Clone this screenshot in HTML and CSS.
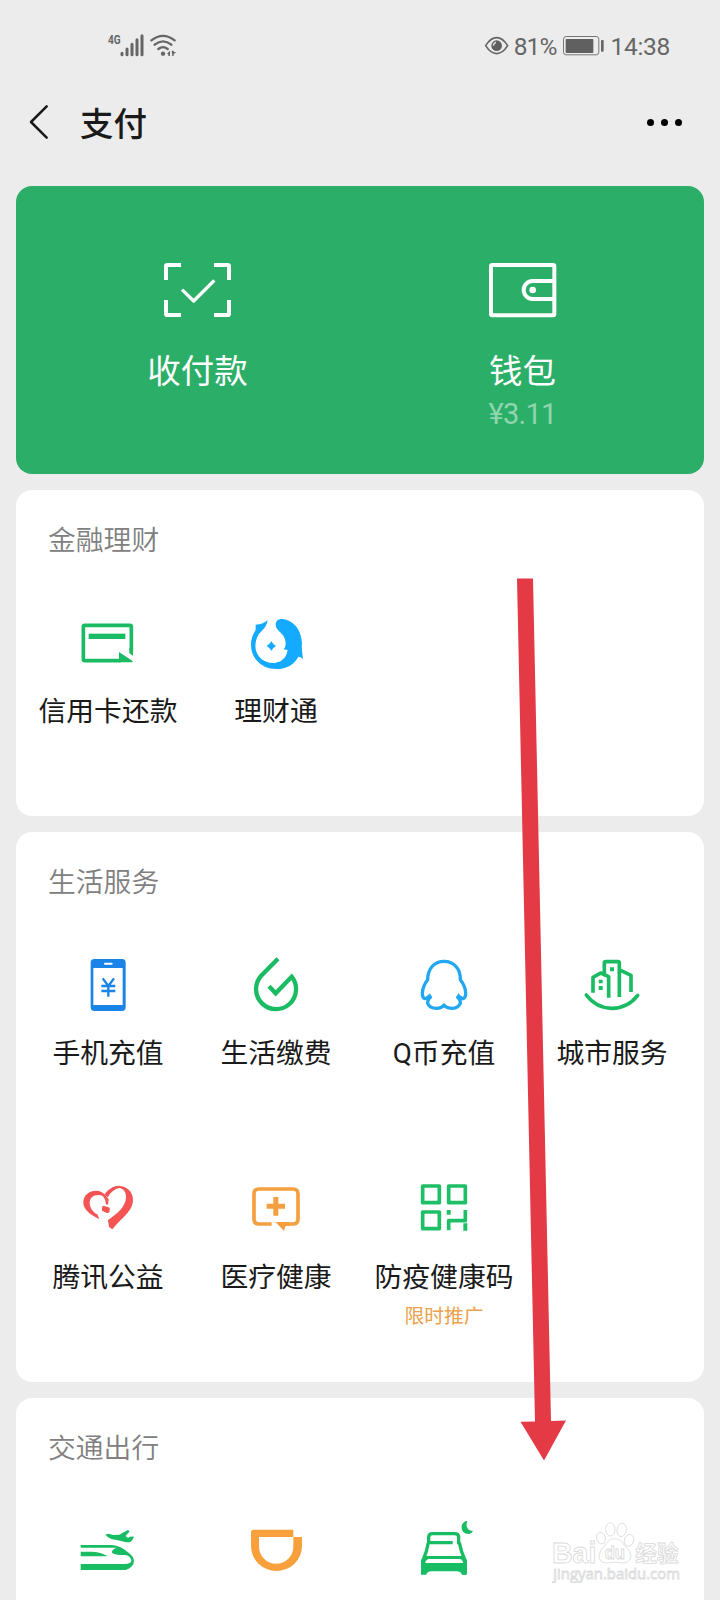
FILE: index.html
```html
<!DOCTYPE html>
<html lang="zh-CN">
<head>
<meta charset="utf-8">
<title>支付</title>
<link rel="stylesheet" href="styles.css">
</head>
<body>
<div class="screen">
  <header class="status">
    <svg class="status-net" viewBox="320 95 215 78">
      <text x="323" y="132" class="net-label" textLength="38" lengthAdjust="spacingAndGlyphs">4G</text>
      <g stroke="#666" stroke-width="9" stroke-linecap="round">
        <path d="M365 159v4M380 146v17M395 132v31M410 118v45M425 106v57"/>
      </g>
      <g fill="none" stroke="#666" stroke-width="7" stroke-linecap="round">
        <path d="M453 120Q488 93 523 120M463 133Q488 113 513 133M474 146Q488 135 502 146"/>
      </g>
      <circle cx="488" cy="160" r="6.500" fill="#666"/>
      <path d="M500 160l9-9v16h-5v-5zM514 151l6 0v4l8 1-8 5v6h-4z" fill="#666"/>
    </svg>
    <div class="status-right">
      <svg class="eye" viewBox="372 105 76 62">
        <path d="M377 137Q392 113 410 113T443 137Q428 161 410 161T377 137Z" fill="none" stroke="#666" stroke-width="5"/>
        <circle cx="410" cy="137" r="16" fill="#606060"/>
        <path d="M400 137q1-8 8-10" fill="none" stroke="#ececec" stroke-width="4"/>
      </svg>
      <span class="status-text pct">81%</span>
      <svg class="battery" viewBox="606 105 129 63">
        <rect x="610.500" y="109.500" width="106" height="55" rx="8" fill="none" stroke="#777" stroke-width="3"/>
        <rect x="617" y="117" width="83" height="42" rx="2" fill="#606060"/>
        <rect x="723" y="120" width="8" height="35" rx="3" fill="#666"/>
      </svg>
      <span class="status-text">14:38</span>
    </div>
  </header>

  <nav class="nav">
    <svg class="back" viewBox="84 312 66 108"><path d="M140 319L93 366L140 413" fill="none" stroke="#181818" stroke-width="7.500" stroke-linecap="round" stroke-linejoin="round"/></svg>
    <h1 class="nav-title">支付</h1>
    <div class="more"><i></i><i></i><i></i></div>
  </nav>

  <main class="cards">
    <section class="pay">
      <div class="pay-item">
        <svg class="pay-icon" viewBox="126 60 213 180" fill="none" stroke="#fff" stroke-width="12">
          <path d="M138 120V79q0-4 4-4h41M282 75h41q4 0 4 4v41M327 180v41q0 4-4 4h-41M183 225h-41q-4 0-4-4v-41"/>
          <path d="M186 149L221 183L283 121" stroke-width="10" stroke-linejoin="round"/>
        </svg>
        <span class="pay-label">收付款</span>
      </div>
      <div class="pay-item">
        <svg class="pay-icon" viewBox="141 60 213 180" fill="none" stroke="#fff" stroke-width="12">
          <rect x="153" y="75" width="190" height="151" rx="4"/>
          <path d="M343 123H278a27 27 0 0 0 0 54H343"/>
          <circle cx="278" cy="150" r="10" fill="#fff" stroke="none"/>
        </svg>
        <span class="pay-label">钱包</span>
        <span class="pay-sum">¥3.11</span>
      </div>
    </section>

    <section class="card">
      <h2 class="card-title">金融理财</h2>
      <div class="grid">
        <div class="item">
          <svg class="icon" viewBox="174 339 180 180">
            <path d="M334 453V380q0-4-4-4H194q-4 0-4 4V478q0 4 4 4H302" fill="none" stroke="#1abb62" stroke-width="11"/>
            <rect x="206" y="401" width="110" height="16" fill="#1abb62"/>
            <path d="M297 456L339 484q-2 3-6 3H297Z" fill="#1abb62"/>
            <path d="M328 444h11v23l-11-7z" fill="#1abb62"/>
          </svg>
          <span class="label">信用卡还款</span>
        </div>
        <div class="item">
          <svg class="icon" viewBox="678 339 180 180">
            <path fill="#14aaff" d="M707 374Q728 374 743 360Q740 379 727 391Q706 410 706 438Q707 462 724 477Q742 491 764 489Q783 487 795 472Q800 465 803 450L791 448Q798 442 797 428Q796 411 780 396Q766 385 767 372Q769 356 788 357Q811 359 828 379Q843 397 846 430Q844 447 849 477Q842 470 835 470Q815 507 769 507Q730 506 708 479Q692 458 693 430Q694 409 707 390Z"/>
            <path fill="#14aaff" d="M754 424q5 9 14 14q-9 5-14 14q-5-9-14-14q9-5 14-14Z"/>
          </svg>
          <span class="label">理财通</span>
        </div>
      </div>
    </section>

    <section class="card">
      <h2 class="card-title">生活服务</h2>
      <div class="grid">
        <div class="item">
          <svg class="icon" viewBox="174 315 180 180">
            <rect x="212" y="327" width="105" height="156" rx="11" fill="#1b84e8"/>
            <path d="M220 354h88v111h-88z" fill="#fff"/>
            <path d="M255 341h20" stroke="#fff" stroke-width="6" stroke-linecap="round"/>
            <path d="M248 385L265 408L282 385M265 407V440M244 408H286M244 423H286" fill="none" stroke="#1b84e8" stroke-width="7"/>
          </svg>
          <span class="label">手机充值</span>
        </div>
        <div class="item">
          <svg class="icon" viewBox="678 315 180 180">
            <path d="M774 326L723 378A60 60 0 1 0 815 380L767 430L747 409" fill="none" stroke="#1abb62" stroke-width="13"/>
          </svg>
          <span class="label">生活缴费</span>
        </div>
        <div class="item">
          <svg class="icon" viewBox="162 75 180 180">
            <path d="M252 94C222 94 203 117 203 149Q188 168 187 190Q187 204 194 206Q203 205 210 196M214 199Q202 208 203 220Q210 235 229 235Q245 235 252 225Q260 235 277 235Q295 234 301 220Q302 208 290 199M294 196Q303 206 310 206Q318 201 317 188Q316 168 301 149C302 117 282 94 252 94" fill="none" stroke="#22a7f0" stroke-width="10" stroke-linejoin="round"/>
            <path d="M209 188l7 13-10 6zM296 188l-7 13 10 6z" fill="#22a7f0"/>
          </svg>
          <span class="label">Q币充值</span>
        </div>
        <div class="item">
          <svg class="icon" viewBox="666 75 180 180" fill="none" stroke="#1abb62" stroke-width="11">
            <path d="M679 195Q708 234 756 235Q804 234 833 196" stroke-linecap="round"/>
            <path d="M699 188V142L722 129L746 140V203M733 132V99q0-4 5-4h35q5 0 5 4V201M782 121L813 136V186" stroke-linejoin="round"/>
            <path d="M716 149h12v11h-12zM716 168h12v12h-12zM750 112h12v12h-12z" fill="#1abb62" stroke="none"/>
          </svg>
          <span class="label">城市服务</span>
        </div>
        <div class="item">
          <svg class="icon" viewBox="174 57 180 180" fill="#f45454">
            <path d="M238 177C212 165 190 148 190 128C190 105 208 92 228 92C240 92 250 97 256 106L266 118L264 134L258 133C256 115 250 105 236 105C218 105 209 115 209 128C209 143 220 158 232 163Z"/>
            <path d="M254 104C262 88 280 78 296 77C322 79 339 95 339 120C339 145 318 165 300 182Q286 196 277 208L267 201L264 180C290 162 318 140 318 110C318 95 310 86 298 84C282 88 270 98 264 112Z"/>
            <path d="M248 137q10 1 21 6q1 8-1 14q-4 3-9 1l-13-6q-1-8 2-15Z"/>
          </svg>
          <span class="label">腾讯公益</span>
        </div>
        <div class="item">
          <svg class="icon" viewBox="678 57 180 180">
            <path d="M755 192H717q-15 0-15-15V102q0-15 15-15H819q15 0 15 15V177q0 15-15 15H790" fill="none" stroke="#f5a040" stroke-width="11"/>
            <path d="M766 186H808V197H797L792 213ZM760 111h15v20h20v15h-20v21h-15v-21h-20v-15h20z" fill="#f5a040"/>
          </svg>
          <span class="label">医疗健康</span>
        </div>
        <div class="item">
          <svg class="icon" viewBox="162 57 180 180">
            <g fill="none" stroke="#1fbf68" stroke-width="11" stroke-linejoin="round">
              <rect x="188" y="78" width="50" height="50"/><rect x="266" y="78" width="50" height="50"/>
              <rect x="188" y="156" width="50" height="50"/>
              <path d="M266 211V182H316V150"/>
            </g>
            <path d="M260 150h12v14h-12zM310 190h12v22h-12z" fill="#1fbf68"/>
          </svg>
          <span class="label">防疫健康码</span>
          <span class="promo">限时推广</span>
        </div>
      </div>
    </section>

    <section class="card">
      <h2 class="card-title">交通出行</h2>
      <div class="grid">
        <div class="item">
          <svg class="icon" viewBox="234 453 180 180" fill="#18bd63">
            <path d="M316 494l9-3 15 4 18-1q14-8 26-14l5 4-12 14q3 5 8 5 5-4 17-3-3 10-11 16-8 2-19-1l-21-5q-23-2-35-16Z"/>
            <path d="M242 525H335Q364 528 384 547Q402 560 402 574Q401 592 377 600H242V582H374Q394 580 394 572Q393 559 376 555Q345 556 336 548Q334 539 350 533H242Z"/>
            <path d="M242 545H276Q308 547 323 559H242Z"/>
          </svg>
        </div>
        <div class="item">
          <svg class="icon" viewBox="738 453 180 180">
            <path d="M880 479V501H777V530A51 51 0 0 0 880 530V501H906V528A76.500 75 0 0 1 753 528V487Q753 479 761 479Z" fill="#f8a03c"/>
          </svg>
        </div>
        <div class="item">
          <svg class="icon" viewBox="102 423 180 180">
            <path d="M146 493V472Q146 461 158 461H224Q236 461 236 472V493M149 488H218M145 488Q141 513 129 541M238 488Q243 515 255 541" fill="none" stroke="#18bd63" stroke-width="10"/>
            <path d="M137 528H247L261 540V582Q260 585 255 585H246V583Q241 574 232 574H153Q141 575 139 584H123V540ZM136 549H249Q248 537 238 537H148Q137 538 136 549Z" fill="#18bd63" fill-rule="evenodd"/>
            <path d="M262 422Q243 427 245 445Q248 463 267 462Q275 460 279 453Q253 451 262 422Z" fill="#18bd63"/>
          </svg>
        </div>
      </div>
    </section>
  </main>

  <svg class="arrow" viewBox="0 0 720 1600">
    <path d="M517 578.500L533 578.500L551 1421L566 1420.500L544 1460.500L520.500 1421.700L535 1421.500Z" fill="#e33a46"/>
  </svg>
  <svg class="watermark" viewBox="510 420 400 190" fill="#fff" stroke="#dadada" stroke-width="2.500">
    <text x="516" y="548" class="wm-brand" textLength="133" lengthAdjust="spacingAndGlyphs">Bai</text>
    <ellipse cx="663" cy="474" rx="13" ry="18" transform="rotate(-15 663 474)"/>
    <ellipse cx="691" cy="448" rx="14" ry="20"/>
    <ellipse cx="725" cy="450" rx="14" ry="20" transform="rotate(10 725 450)"/>
    <ellipse cx="747" cy="481" rx="14" ry="18" transform="rotate(20 747 481)"/>
    <path d="M704 476Q722 476 733 496Q754 514 753 532Q747 550 728 549Q704 544 680 549Q658 549 657 528Q658 510 675 496Q687 476 704 476Z"/>
    <text x="674" y="536" class="wm-du" textLength="61" lengthAdjust="spacingAndGlyphs">du</text>
    <text x="766" y="543" class="wm-cn" textLength="130">经验</text>
    <text x="520" y="596" class="wm-url" textLength="380" lengthAdjust="spacingAndGlyphs">jingyan.baidu.com</text>
  </svg>
</div>
</body>
</html>
```
FILE: styles.css
```css
* { box-sizing: border-box; }
html, body { margin: 0; }
body {
  background: #ececec;
  font-family: Roboto, "Noto Sans CJK SC", sans-serif;
  color: #1a1a1a;
}
svg { display: block; flex: none; }
.screen {
  position: relative;
  width: 720px;
  height: 1600px;
  overflow: hidden;
}

.status {
  height: 90px;
  padding: 0 50px 0 107px;
  display: flex;
  justify-content: space-between;
  align-items: center;
}
.status-net { width: 71.700px; height: 26px; }
.net-label { font: 700 40px Roboto, sans-serif; fill: #666; }
.status-right { display: flex; align-items: center; }
.eye { width: 25.300px; height: 20.700px; margin-right: 4px; }
.battery { width: 43px; height: 21px; margin: 0 5px 0 6px; }
.status-text {
  font-size: 24.500px;
  line-height: 30px;
  color: #666;
  letter-spacing: -0.300px;
  padding-top: 3px;
}
.pct { letter-spacing: -0.900px; }

.nav {
  height: 96px;
  padding: 0 38px 32px 28px;
  display: flex;
  align-items: center;
}
.back { width: 22px; height: 36px; }
.nav-title {
  margin: 6px auto 0 30px;
  font-size: 33.500px;
  line-height: 48px;
  font-weight: 500;
}
.more { display: flex; gap: 7px; }
.more i { width: 7px; height: 7px; border-radius: 50%; background: #000; }

.cards {
  display: flex;
  flex-direction: column;
  gap: 16px;
  padding: 0 16px;
}
.pay {
  height: 288px;
  padding: 74px 19px 0;
  border-radius: 16px;
  background: #2bae67;
  color: #fff;
  display: flex;
}
.pay-item {
  flex: 1;
  display: flex;
  flex-direction: column;
  align-items: center;
}
.pay-icon { width: 71px; height: 60px; }
.pay-label { margin-top: 28px; font-size: 33.500px; line-height: 48px; }
.pay-sum {
  font-size: 29px;
  line-height: 36px;
  letter-spacing: -0.800px;
  color: #8fd5ad;
}

.card {
  padding: 0 8px;
  border-radius: 16px;
  background: #fff;
}
.card-title {
  margin: 0;
  height: 102px;
  padding: 31px 24px 0;
  font-size: 27.800px;
  line-height: 40px;
  font-weight: 350;
  color: #808080;
}
.grid { display: grid; grid-template-columns: repeat(4, 168px); grid-auto-rows: 224px; }
.item {
  display: flex;
  flex-direction: column;
  align-items: center;
  padding-top: 21px;
  white-space: nowrap;
}
.icon { width: 60px; height: 60px; }
.label { margin-top: 19px; font-size: 27.800px; line-height: 40px; }
.promo { margin-top: 5px; font-size: 19.800px; line-height: 28px; color: #eaa24c; }

.arrow { position: absolute; left: 0; top: 0; width: 720px; height: 1600px; }
.watermark {
  position: absolute;
  left: 550px;
  top: 1520px;
  width: 133.300px;
  height: 63.300px;
}
.wm-brand { font: 700 90px "Liberation Sans", sans-serif; }
.wm-du { font: 700 54px "Liberation Sans", sans-serif; }
.wm-cn { font: 700 65px "Noto Sans CJK SC", sans-serif; }
.wm-url { font: 400 46px "Open Sans", sans-serif; }
```
